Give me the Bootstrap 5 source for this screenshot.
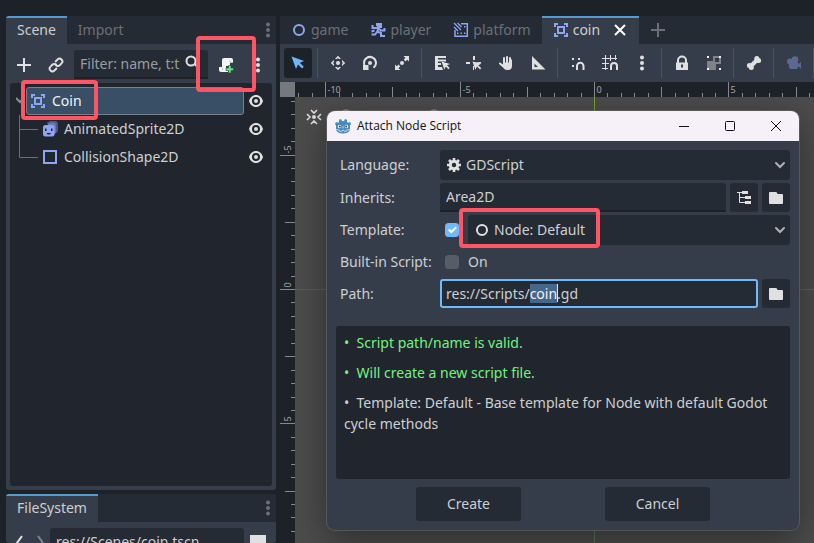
<!DOCTYPE html>
<html lang="en" data-bs-theme="dark">
<head>
<meta charset="utf-8">
<meta name="viewport" content="width=device-width, initial-scale=1">
<title>Godot Editor - Attach Node Script</title>
<link href="https://cdn.jsdelivr.net/npm/bootstrap@5.3.0/dist/css/bootstrap.min.css" rel="stylesheet">
<style>
:root { --base:#363d4a; --dark:#252b34; --page:#1d2229; --well:#21262e; --text:#cdcfd2; --dim:#6b7078; --accent:#569ad0; --node:#8da5f3; --icon:#e0e0e0; }
body { font-family:"Noto Sans","Open Sans",sans-serif; font-size:14px; line-height:20px; background:var(--page); color:var(--text); }
svg { display:block; flex:none; }
.ico { width:16px; height:16px; fill:currentColor; }
.editor { padding:16px 0 0 6px; gap:4px; }
.dock-col { width:270px; gap:4px; flex:none; }
.dock { background:var(--base); border-radius:3px; overflow:hidden; }
.dock-files { flex:0 0 49px; }
.tabs { background:var(--dark); height:28px; flex:none; color:var(--dim); }
.tabs .tab { border:0; border-top:2px solid transparent; border-radius:0; background:none; padding:0 11px 2px; gap:4px; font-size:14px; line-height:20px; color:var(--dim); display:flex; align-items:center; }
.tabs .tab.active { background:var(--base); border-top-color:var(--accent); color:var(--text); }
.bar { gap:4px; color:var(--icon); }
.tool { width:28px; height:30px; border:0; border-radius:3px; padding:0; background:none; color:inherit; display:flex; align-items:center; justify-content:center; flex:none; }
.tool.on { background:var(--page); color:#6db6f8; }
.tool.slim { width:20px; }
.sep { width:4px; height:30px; flex:none; background:linear-gradient(90deg,transparent 1px,#4d535e 1px 2px,transparent 2px); }
.dock .bar { padding:6px 4px 4px; }
.dock .tool { height:29px; }
.field, .field:focus { font-size:14px; line-height:20px; height:29px; padding:0 6px; border:0; border-bottom:2px solid #1d2229; border-radius:3px 3px 0 0; background:var(--dark); color:var(--text); box-shadow:none; min-width:0; }
.field::placeholder { color:#9a9da1; opacity:1; }
.tree { background:var(--well); margin:0 4px 4px; border-radius:3px; padding:4px 0; }
.tree-row { height:28px; padding-right:8px; color:var(--icon); }
.tree-name { color:var(--text); gap:6px; height:28px; margin-left:32px; }
.tree-name.selected { margin-left:16px; padding-left:3px; margin-right:4px; background:#394f66; border:1px solid #75818c; border-radius:3px; color:#f2f3f4; }
.tree-lines { left:9px; top:32px; width:19px; height:44px; fill:none; stroke:#6b6f75; }
.fold { left:6px; top:13px; width:8px; height:8px; }
.node { color:var(--node); }
.callout { border:4px solid #ff5565; border-radius:4px; pointer-events:none; z-index:5; }
.callout-script { left:-16px; right:-16px; top:-14px; bottom:-13px; }
.callout-root { left:11px; width:77px; top:-3px; height:40px; }
.callout-template { left:-9px; width:141px; top:-7px; bottom:-3px; }
.main { background:var(--base); border-radius:3px 0 0 0; overflow:hidden; }
.main > .bar { padding:4px; height:38px; flex:none; overflow:hidden; }
.view { display:grid; grid-template:15px 1fr / 15px 1fr; background:var(--page); min-height:0; }
.corner { background:#75787c; }
.ruler { width:100%; height:100%; overflow:hidden; stroke:#85888c; fill:#a2a4a7; font-size:9px; }
.ruler text { stroke:none; }
.canvas { background:#4c4c4c; min-width:0; overflow:hidden; }
.axes { width:100%; height:100%; }
.hud { left:11px; top:12px; width:160px; height:16px; }
.dialog-win { left:32px; right:15px; top:14px; border-radius:8px; background:var(--base); box-shadow:0 0 0 1px rgba(110,110,110,.55), 0 10px 36px rgba(0,0,0,.42); }
.titlebar { height:30px; background:#f6f1f8; color:#111; border-radius:8px 8px 0 0; font-size:12px; padding-left:8px; font-family:"Open Sans","Noto Sans",sans-serif; }
.titlebar .title { padding-left:6px; }
.titlebar button { width:46px; height:30px; border:0; padding:0; background:none; color:#111; display:flex; align-items:center; justify-content:center; }
.dialog-in { padding:9px; }
.form-line { gap:4px; margin-bottom:3px; min-height:28px; }
.form-line > .lbl { width:100px; padding-left:4px; flex:none; margin-right:-4px; }
.pick { height:30px; border:0; border-radius:3px; background-color:var(--dark); color:var(--text); font-size:14px; line-height:20px; padding:0 26px 1px; background-image:none; }
.pick-ico { left:6px; top:7px; pointer-events:none; color:var(--icon); }
.pick-arrow { right:2px; top:7px; pointer-events:none; color:#aeb1b5; }
.form-line .tool { height:29px; background:var(--dark); color:var(--icon); }
.tick { width:14px; height:14px; margin:0 5px 0 9px; border:0; border-radius:2px; background-color:#575d67; flex:none; background-size:14px; }
.tick:checked { background-color:#70bafa; }
.path, .path:focus { border:2px solid #70bafa; border-radius:3px; padding:0 4px; }
.path::selection { background:#44678a; color:#f2f3f4; }
.caret { left:117px; top:5px; width:1px; height:18px; background:#e6e6e6; }
.notes { background:var(--well); border-radius:3px; min-height:153px; padding:6px 8px; line-height:21px; margin-top:18px; margin-bottom:8px; }
.notes p { margin-bottom:9px; }
.valid { color:#73f280; }
.act { width:105px; height:34px; border:0; border-radius:3px; background:var(--dark); color:var(--text); font-size:14px; }
.acts { gap:84px; }
</style>
<script src="https://cdn.jsdelivr.net/npm/bootstrap@5.3.0/dist/js/bootstrap.bundle.min.js"></script>
</head>
<body class="vh-100 overflow-hidden">
<svg width="0" height="0" class="position-absolute" aria-hidden="true">
  <symbol id="plus" viewBox="0 0 16 16"><path d="M7 1h2v6h6v2H9v6H7V9H1V7h6z"/></symbol>
  <symbol id="link" viewBox="0 0 16 16"><g fill="none" stroke="currentColor" stroke-width="1.900" transform="rotate(-45 8 8)"><path d="M6.500 10.800H3a2.800 2.800 0 0 1 0-5.600h2.500a2.800 2.800 0 0 1 2.700 3.600M9.500 5.200H13a2.800 2.800 0 0 1 0 5.600h-2.500a2.800 2.800 0 0 1-2.700-3.600"/></g></symbol>
  <symbol id="search" viewBox="0 0 16 16"><g fill="none" stroke="currentColor" stroke-width="2"><circle cx="7" cy="7" r="4.500"/><path d="m10.500 10 4 4"/></g></symbol>
  <symbol id="script" viewBox="0 0 16 16"><path fill="#f4f4f4" d="M6 1a2 2 0 0 0-2 2v7H1v3a2 2 0 0 0 2 2h7v-2H8V9h4V6h3V3a2 2 0 0 0-2-2z"/><path stroke="#b9bcc0" d="M4.500 10.500V13M12 3.500V5.500h3" fill="none"/><path fill="#5fee75" stroke="#363d4a" stroke-width=".6" d="M10.500 8.500h2.500v2.500h2.500v2.500h-2.500V16h-2.500v-2.500H8V11h2.500z"/></symbol>
  <symbol id="dots" viewBox="0 0 16 16"><circle cx="8" cy="2.500" r="2"/><circle cx="8" cy="8" r="2"/><circle cx="8" cy="13.500" r="2"/></symbol>
  <symbol id="area" viewBox="0 0 16 16"><path fill="none" stroke="currentColor" stroke-width="2" d="M2 5V2h3M11 2h3v3M14 11v3h-3M5 14H2v-3M5 5h6v6H5z"/></symbol>
  <symbol id="sprite" viewBox="0 0 16 16"><path fill="#4b5a8c" d="M7 0h6a3 3 0 0 1 3 3v6a3 3 0 0 1-3 3z"/><path fill="#6478bb" d="M5 1.500h6a3 3 0 0 1 3 3v7a3 3 0 0 1-3 2z"/><rect x="1" y="4" width="11.500" height="11.500" rx="2.500"/><path fill="#21262e" d="M3 7.500h1.500V10H3zM9 7.500h1.500V10H9zM4.500 12h4.500a2.300 2 0 0 1-4.500 0z"/></symbol>
  <symbol id="shape" viewBox="0 0 16 16"><path fill="none" stroke="currentColor" stroke-width="2" d="M2 2h12v12H2z"/></symbol>
  <symbol id="eye" viewBox="0 0 16 16"><path fill-rule="evenodd" d="M8 2c3.400 0 6 2.500 7 6-1 3.500-3.600 6-7 6S2 11.500 1 8c1-3.500 3.600-6 7-6zm0 2a4 4 0 1 0 0 8 4 4 0 0 0 0-8zm0 2a2 2 0 1 1 0 4 2 2 0 0 1 0-4z"/></symbol>
  <symbol id="ring" viewBox="0 0 16 16"><circle cx="8" cy="8" r="5" fill="none" stroke="currentColor" stroke-width="2"/></symbol>
  <symbol id="runner" viewBox="0 0 16 16"><path d="M6 1h6v5H7V4H6z"/><path fill="none" stroke="currentColor" stroke-width="2" d="M2.500 3v3h6L7 10l-2 2.500H1.500M8.500 6.500l2.500 2h3.500V6M7 9.500l4 1.500v3h4M4.500 8.500l-3 1"/></symbol>
  <symbol id="plat" viewBox="0 0 16 16"><path fill="none" stroke="currentColor" stroke-width="1.500" d="M8 1.700h6.300v12.600H2V8"/><path fill="none" stroke="currentColor" stroke-width="1.300" d="m1 1 7 7M1 5l4 4M4.500 1l4 4"/><path d="M11 4h1.500v1.500H11zM11 10.500h1.500V12H11zM4 10.500h1.500V12H4zM7.500 10.500H9V12H7.500z"/></symbol>
  <symbol id="close" viewBox="0 0 16 16"><path fill="none" stroke="currentColor" stroke-width="2" d="m3 3 10 10M13 3 3 13"/></symbol>
  <symbol id="select" viewBox="0 0 16 16"><path d="m1.500 1.500 4.500 12.500 2-4.500 4 4 1.800-1.800-4-4 4.400-1.700z"/></symbol>
  <symbol id="move" viewBox="0 0 16 16"><circle cx="8" cy="8" r="2"/><path d="m8 .8 3 3.200H9L8 3 7 4H5zM8 15.200l3-3.200H9l-1 1-1-1H5zM.8 8 4 5v2L3 8l1 1v2zM15.200 8 12 5v2l1 1-1 1v2z"/></symbol>
  <symbol id="rotate" viewBox="0 0 16 16"><circle cx="8" cy="8" r="2"/><path fill="none" stroke="currentColor" stroke-width="2" d="M11.500 12.800A6 6 0 1 0 2 8c0 1.500.500 3 1.500 4"/><path d="M1 10h5.500v5H1z"/></symbol>
  <symbol id="scale" viewBox="0 0 16 16"><circle cx="8" cy="8" r="2"/><path d="M9.500 1H15v5.500l-1.800-1.800-1.700 1.700-1.700-1.700 1.500-1.900zM1 9.500l1.800 1.700 1.700-1.700 1.700 1.700-1.700 2L6.500 15H1z"/></symbol>
  <symbol id="list" viewBox="0 0 16 16"><path d="M1 1h11v2H4v1.500h8v2H4V8h3v2H4v2h4l1 3H1z"/><path d="m7.500 6.500 2.800 8 1.500-3 2.700 2.700 1.200-1.200-2.700-2.700 3-1.300z"/></symbol>
  <symbol id="pivot" viewBox="0 0 16 16"><path d="M7 1h2v4H7zM0 7h4v2H0zM11 7h4v1h-4zM7 11h1v4H7zM6.500 6.500l2.800 8.200 1.700-3.200 3 3 1.300-1.300-3-3 3.200-1.600z"/></symbol>
  <symbol id="hand" viewBox="0 0 16 16"><path fill="none" stroke="currentColor" stroke-width="2" stroke-linecap="round" d="M6 3v6M9 2v6M12 3v6M2 8.500 5 11"/><path d="M5 7.500h8V4.500h1V11a4 4 0 0 1-4 4H9c-2 0-3-1-4-2.500L2 9.500h3z"/></symbol>
  <symbol id="measure" viewBox="0 0 16 16"><path fill-rule="evenodd" d="M2 1v13.500h13.500zm2.500 7.500 3.500 3.500H4.500z"/></symbol>
  <symbol id="snap" viewBox="0 0 16 16"><path d="M2 3h2v2H2zM8 3h2v2H8zM2 10h2v2H2z"/><path fill="none" stroke="currentColor" stroke-width="2" d="M7 15v-4a3 3 0 0 1 6.500 0v4"/></symbol>
  <symbol id="grid" viewBox="0 0 16 16"><path fill="none" stroke="currentColor" d="M3.500 0v15M8.500 0v6M13.500 0v5M0 3.500h15M0 8.500h7M0 13.500h6"/><path fill="none" stroke="currentColor" stroke-width="2" d="M9 15v-4a3 3 0 0 1 6 0v4"/></symbol>
  <symbol id="lock" viewBox="0 0 16 16"><path fill="none" stroke="currentColor" stroke-width="2" d="M4 8V5.500a4 4 0 0 1 8 0V8"/><path fill-rule="evenodd" d="M2 7.500h12V15H2zm5 2v3h2v-3z"/></symbol>
  <symbol id="group" viewBox="0 0 16 16"><path fill="#7f8288" fill-rule="evenodd" d="M7 1h8v8h-5v6H1V6h6zm2 2v4h4V3z"/><path fill="#f4f4f4" d="M1 1h2v2H1zM13 1h2v2h-2zM1 13h2v2H1zM13 13h2v2h-2z"/></symbol>
  <symbol id="bone" viewBox="0 0 16 16"><path stroke="currentColor" stroke-width="4" d="m4.500 11.500 7-7"/><circle cx="10.800" cy="3.500" r="2.500"/><circle cx="12.600" cy="5.500" r="2.500"/><circle cx="3.400" cy="10.500" r="2.500"/><circle cx="5.300" cy="12.600" r="2.500"/></symbol>
  <symbol id="cam" viewBox="0 0 16 16"><circle cx="9" cy="4.500" r="3.300"/><circle cx="4" cy="6.500" r="3"/><rect x="3" y="6" width="9" height="8" rx="2"/><path d="m11 10 4-3v7z"/></symbol>
  <symbol id="gear" viewBox="0 0 16 16"><circle cx="8" cy="8" r="3.700" fill="none" stroke="currentColor" stroke-width="3"/><path stroke="currentColor" stroke-width="2.600" d="M8 1v3M8 12v3M1 8h3M12 8h3M3 3l2 2M11 11l2 2M3 13l2-2M11 5l2-2"/></symbol>
  <symbol id="chev" viewBox="0 0 16 16"><path fill="none" stroke="currentColor" stroke-width="2" stroke-linecap="round" d="m4 6 4 4 4-4"/></symbol>
  <symbol id="treeico" viewBox="0 0 16 16"><path d="M6 1h6v3H6zM9 6h6v3H9zM9 11h6v3H9z"/><path fill="none" stroke="currentColor" d="M1 2.500h5M3.500 2v10.500H9M3.500 7.500H9"/></symbol>
  <symbol id="folder" viewBox="0 0 16 16"><path d="M1 3a1 1 0 0 1 1-1h5.500a2 2 0 0 1 2 2H14a1 1 0 0 1 1 1v8a1 1 0 0 1-1 1H2a1 1 0 0 1-1-1z"/></symbol>
  <symbol id="godot" viewBox="0 0 16 16"><path fill="#478cbf" d="M6 1l1 2h2l1-2 2 .8V4l1.200.8L15 4l1 2-1 1.500V12c-1 2.500-4 3.500-7 3.500S2 14.500 1 12V7.500L0 6l1-2 1.800.8L4 4V1.800z"/><circle cx="4.500" cy="8.500" r="1.700" fill="#fff"/><circle cx="11.500" cy="8.500" r="1.700" fill="#fff"/><circle cx="4.800" cy="8.600" r="1" fill="#414042"/><circle cx="11.200" cy="8.600" r="1" fill="#414042"/><path stroke="#dfeaf3" stroke-width=".8" fill="none" d="M8 8v2.500M1 11.500l3 .5.500 1.200 2 .2.500-1h2l.5 1 2-.2.500-1.200 3-.5"/></symbol>
</svg>

<div class="editor d-flex h-100">
  <aside class="dock-col d-flex flex-column">
    <section class="dock d-flex flex-column flex-fill">
      <div class="tabs d-flex">
        <button class="tab active">Scene</button>
        <button class="tab">Import</button>
        <svg class="ico ms-auto align-self-center"><use href="#dots"/></svg>
      </div>
      <div class="bar d-flex">
        <button class="tool" aria-label="Add node"><svg class="ico"><use href="#plus"/></svg></button>
        <button class="tool" aria-label="Instance scene"><svg class="ico"><use href="#link"/></svg></button>
        <div class="position-relative flex-fill">
          <input class="field form-control" aria-label="Filter nodes" placeholder="Filter: name, t:t">
          <svg class="ico position-absolute top-0 end-0 mt-1 me-2"><use href="#search"/></svg>
        </div>
        <button class="tool position-relative" aria-label="Attach script"><svg class="ico"><use href="#script"/></svg><span class="callout callout-script position-absolute"></span></button>
        <button class="tool" aria-label="More"><svg class="ico"><use href="#dots"/></svg></button>
      </div>
      <div class="tree flex-fill position-relative">
        <svg class="tree-lines position-absolute"><path d="M.5 0v42.500H19M.5 14.500H19"/></svg>
        <div class="tree-row d-flex align-items-center">
          <svg class="fold position-absolute" viewBox="0 0 8 8" fill="none" stroke="#8b8f94" stroke-width="2"><path d="m0 2 4 4 4-4"/></svg>
          <div class="tree-name selected d-flex align-items-center flex-fill"><svg class="ico node"><use href="#area"/></svg>Coin</div>
          <svg class="ico"><use href="#eye"/></svg>
        </div>
        <div class="tree-row d-flex align-items-center">
          <div class="tree-name d-flex align-items-center flex-fill"><svg class="ico node"><use href="#sprite"/></svg>AnimatedSprite2D</div>
          <svg class="ico"><use href="#eye"/></svg>
        </div>
        <div class="tree-row d-flex align-items-center">
          <div class="tree-name d-flex align-items-center flex-fill"><svg class="ico node"><use href="#shape"/></svg>CollisionShape2D</div>
          <svg class="ico"><use href="#eye"/></svg>
        </div>
        <span class="callout callout-root position-absolute"></span>
      </div>
    </section>
    <section class="dock dock-files">
      <div class="tabs d-flex">
        <button class="tab active">FileSystem</button>
        <svg class="ico ms-auto align-self-center"><use href="#dots"/></svg>
      </div>
      <div class="bar d-flex">
        <svg width="36" height="29" fill="none" stroke-width="2"><path stroke="#e0e0e0" d="m12 8-5 7 5 7"/><path stroke="#80858c" d="m28 8 5 7-5 7"/></svg>
        <input class="field form-control flex-fill" aria-label="Current path" value="res://Scenes/coin.tscn">
        <button class="tool slim me-1" aria-label="Split mode"><svg class="ico"><path d="M0 0h16v16H0z"/></svg></button>
      </div>
    </section>
  </aside>

  <main class="main d-flex flex-column flex-fill">
    <div class="tabs d-flex">
      <button class="tab"><svg class="ico node"><use href="#ring"/></svg>game</button>
      <button class="tab"><svg class="ico node"><use href="#runner"/></svg>player</button>
      <button class="tab"><svg class="ico node"><use href="#plat"/></svg>platform</button>
      <button class="tab active"><svg class="ico node"><use href="#area"/></svg>coin<svg class="ico ms-2 text-white"><use href="#close"/></svg></button>
      <button class="tab" aria-label="New scene"><svg class="ico"><use href="#plus"/></svg></button>
    </div>
    <div class="bar d-flex">
      <button class="tool on" aria-label="Select"><svg class="ico"><use href="#select"/></svg></button>
      <span class="sep"></span>
      <button class="tool" aria-label="Move"><svg class="ico"><use href="#move"/></svg></button>
      <button class="tool" aria-label="Rotate"><svg class="ico"><use href="#rotate"/></svg></button>
      <button class="tool" aria-label="Scale"><svg class="ico"><use href="#scale"/></svg></button>
      <span class="sep"></span>
      <button class="tool" aria-label="List select"><svg class="ico"><use href="#list"/></svg></button>
      <button class="tool" aria-label="Pivot"><svg class="ico"><use href="#pivot"/></svg></button>
      <button class="tool" aria-label="Pan"><svg class="ico"><use href="#hand"/></svg></button>
      <button class="tool" aria-label="Measure"><svg class="ico"><use href="#measure"/></svg></button>
      <span class="sep"></span>
      <button class="tool" aria-label="Smart snap"><svg class="ico"><use href="#snap"/></svg></button>
      <button class="tool" aria-label="Grid snap"><svg class="ico"><use href="#grid"/></svg></button>
      <button class="tool" aria-label="Snap options"><svg class="ico"><use href="#dots"/></svg></button>
      <span class="sep"></span>
      <button class="tool" aria-label="Lock"><svg class="ico"><use href="#lock"/></svg></button>
      <button class="tool" aria-label="Group"><svg class="ico"><use href="#group"/></svg></button>
      <span class="sep"></span>
      <button class="tool" aria-label="Skeleton"><svg class="ico"><use href="#bone"/></svg></button>
      <span class="sep"></span>
      <button class="tool" aria-label="Override camera"><svg class="ico" color="#5a6894"><use href="#cam"/></svg></button>
      <span class="sep"></span>
    </div>
    <div class="view flex-fill">
      <div class="corner"></div>
      <svg class="ruler" id="ruler-x"></svg>
      <svg class="ruler" id="ruler-y"></svg>
      <div class="canvas position-relative">
        <svg class="axes"><path stroke="#a33b46" d="M0 192.500h299"/><path stroke="#87437d" d="M299 192.500h2000"/><path stroke="#76a824" d="M299.500 0v192"/><path stroke="#56795a" d="M299.500 192v2000"/></svg>
        <svg class="hud position-absolute"><g fill="none" stroke="#e0e0e0" stroke-width="1.600"><path d="m5 1 3 3 3-3M5 15l3-3 3 3M1 5l3 3-3 3M15 5l-3 3 3 3"/></g><circle cx="8" cy="8" r="2" fill="#e0e0e0"/><g fill="none" stroke="#bbb"><circle cx="40" cy="8" r="7"/><circle cx="128" cy="8" r="7"/></g></svg>

        <div class="dialog-win position-absolute" role="dialog" aria-label="Attach Node Script">
          <div class="titlebar d-flex align-items-center">
            <svg class="ico"><use href="#godot"/></svg>
            <span class="title me-auto">Attach Node Script</span>
            <button aria-label="Minimize"><svg width="10" height="10" stroke="#111"><path d="M0 5.500h10"/></svg></button>
            <button aria-label="Maximize"><svg width="10" height="10" stroke="#111" fill="none"><rect x=".5" y=".5" width="9" height="9" rx="1"/></svg></button>
            <button aria-label="Close"><svg width="10" height="10" stroke="#111"><path d="m0 0 10 10M10 0 0 10"/></svg></button>
          </div>
          <div class="dialog-in">
            <div class="form-line d-flex align-items-center">
              <label class="lbl" for="lang">Language:</label>
              <div class="position-relative flex-fill ms-1">
                <select class="pick form-select" id="lang"><option>GDScript</option></select>
                <svg class="ico pick-ico position-absolute"><use href="#gear"/></svg>
                <svg class="ico pick-arrow position-absolute"><use href="#chev"/></svg>
              </div>
            </div>
            <div class="form-line d-flex align-items-center">
              <label class="lbl" for="inh">Inherits:</label>
              <input class="field form-control flex-fill ms-1" id="inh" value="Area2D">
              <button class="tool" aria-label="Pick class"><svg class="ico"><use href="#treeico"/></svg></button>
              <button class="tool" aria-label="Browse base script"><svg class="ico"><use href="#folder"/></svg></button>
            </div>
            <div class="form-line d-flex align-items-center">
              <label class="lbl" for="use-tpl">Template:</label>
              <input class="tick form-check-input" type="checkbox" id="use-tpl" checked>
              <div class="position-relative flex-fill">
                <select class="pick form-select" aria-label="Template"><option>Node: Default</option></select>
                <svg class="ico pick-ico position-absolute"><use href="#ring"/></svg>
                <svg class="ico pick-arrow position-absolute"><use href="#chev"/></svg>
                <span class="callout callout-template position-absolute"></span>
              </div>
            </div>
            <div class="form-line d-flex align-items-center">
              <label class="lbl" for="builtin">Built-in Script:</label>
              <input class="tick form-check-input" type="checkbox" id="builtin">
              <label for="builtin">On</label>
            </div>
            <div class="form-line d-flex align-items-center mb-0">
              <label class="lbl" for="path">Path:</label>
              <div class="position-relative flex-fill ms-1">
                <input class="field path form-control" id="path" value="res://Scripts/coin.gd">
                <span class="caret position-absolute"></span>
              </div>
              <button class="tool" aria-label="Browse path"><svg class="ico"><use href="#folder"/></svg></button>
            </div>
            <div class="notes">
              <p class="valid">•&nbsp; Script path/name is valid.</p>
              <p class="valid">•&nbsp; Will create a new script file.</p>
              <p class="mb-0">•&nbsp; Template: Default - Base template for Node with default Godot cycle methods</p>
            </div>
            <div class="acts d-flex justify-content-center">
              <button class="act">Create</button>
              <button class="act">Cancel</button>
            </div>
          </div>
        </div>
      </div>
    </div>
  </main>
</div>
<script>
// Ruler ticks: ten per labelled step of five units, long on labels and medium halfway.
function drawRuler(id, origin, vertical) {
  const svg = document.getElementById(id);
  const box = svg.getBoundingClientRect();
  const length = vertical ? box.height : box.width;
  const step = 13.44;
  let d = '', labels = '';
  for (let i = Math.ceil(-origin / step); origin + i * step < length; i++) {
    const p = Math.round(origin + i * step) + 0.5;
    const from = i % 10 === 0 ? 0 : i % 5 === 0 ? 5 : 11;
    d += vertical ? `M${from} ${p}H15` : `M${p} ${from}V15`;
    if (i % 10 === 0 && p + 16 < length) {
      labels += vertical
        ? `<text transform="translate(11 ${p - 2}) rotate(-90)">${i / 2}</text>`
        : `<text x="${p + 2}" y="11">${i / 2}</text>`;
    }
  }
  svg.innerHTML = `<path d="${d}"/>${labels}`;
}
function drawRulers() {
  drawRuler('ruler-x', 299, false);
  drawRuler('ruler-y', 192, true);
}
drawRulers();
window.addEventListener('resize', drawRulers);
const path = document.getElementById('path');
path.focus();
path.setSelectionRange(14, 18);
</script>
</body>
</html>
